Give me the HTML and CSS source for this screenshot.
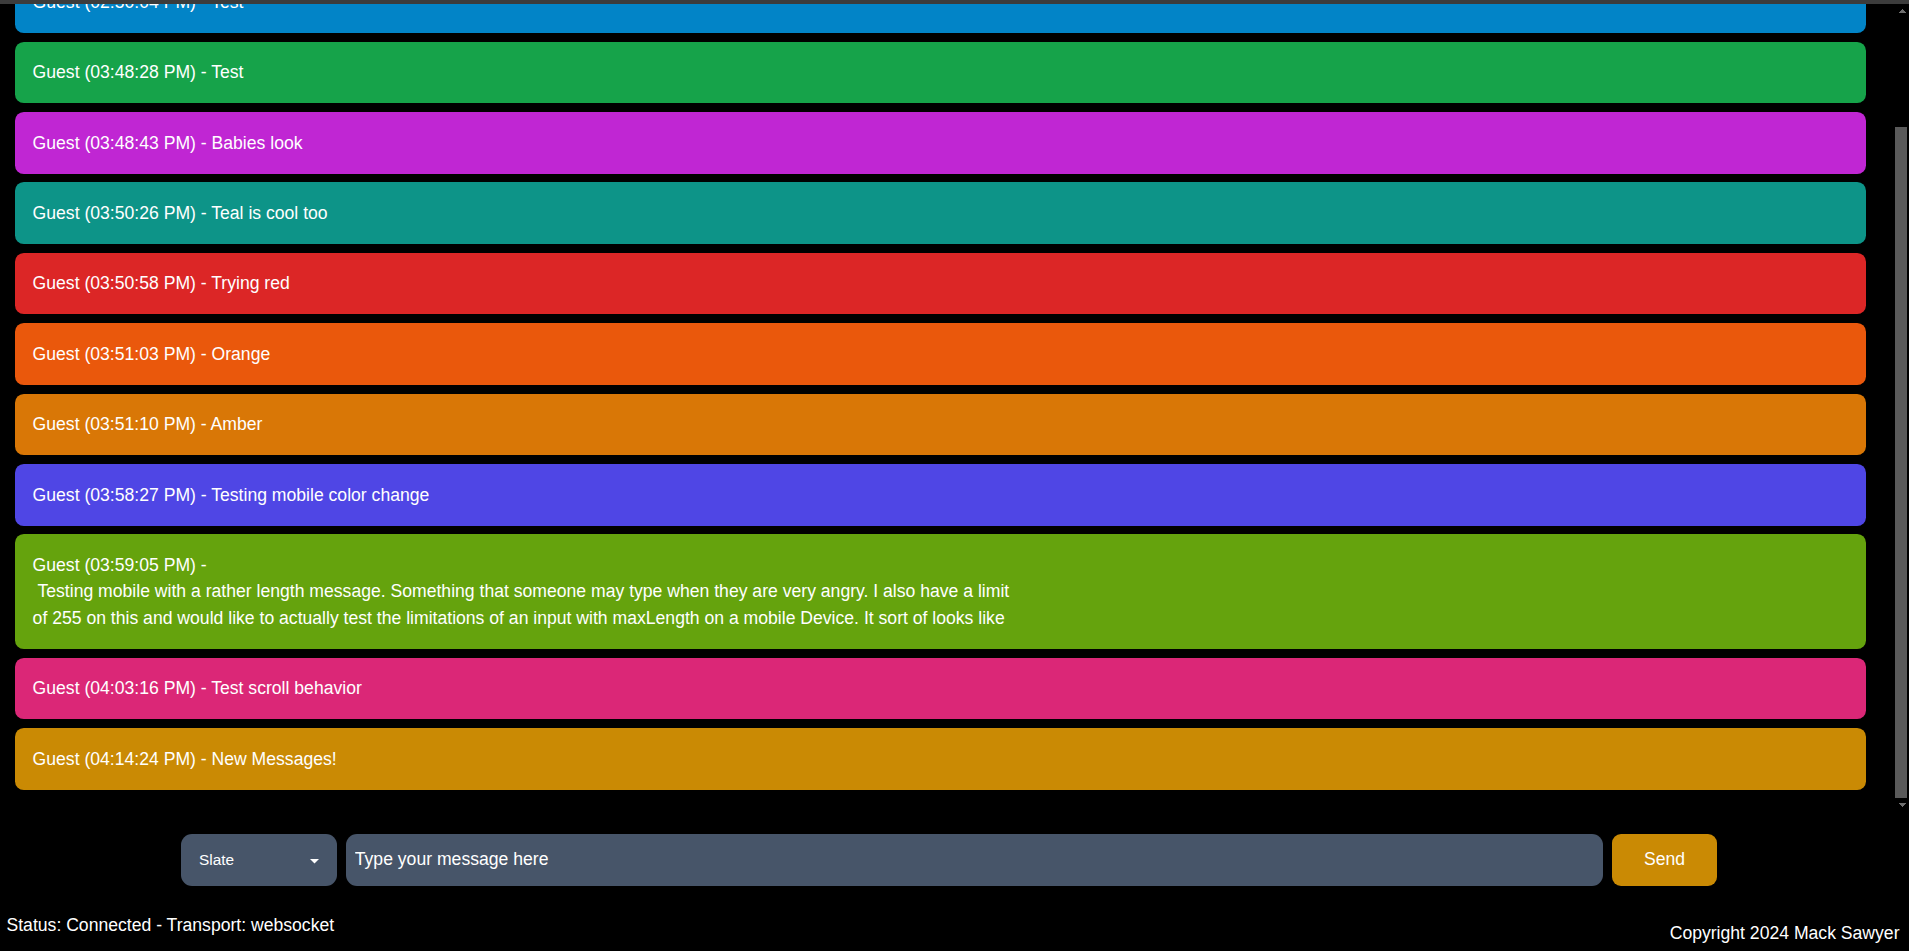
FILE: index.html
```html
<!DOCTYPE html>
<html lang="en">
<head>
<meta charset="utf-8">
<title>Chat</title>
<link rel="stylesheet" href="styles.css">
</head>
<body>
<div class="topbar"></div>
<div class="chat-area">
  <main class="chat">
    <div class="log">
      <div class="msg sky">Guest (02:49:12 PM) - Hello there</div>
      <div class="msg sky">Guest (02:50:04 PM) - Test</div>
      <div class="msg green">Guest (03:48:28 PM) - Test</div>
      <div class="msg fuchsia">Guest (03:48:43 PM) - Babies look</div>
      <div class="msg teal">Guest (03:50:26 PM) - Teal is cool too</div>
      <div class="msg red">Guest (03:50:58 PM) - Trying red</div>
      <div class="msg orange">Guest (03:51:03 PM) - Orange</div>
      <div class="msg amber">Guest (03:51:10 PM) - Amber</div>
      <div class="msg indigo">Guest (03:58:27 PM) - Testing mobile color change</div>
      <div class="msg lime">Guest (03:59:05 PM) - <br>&nbsp;Testing mobile with a rather length message. Something that someone may type when they are very angry. I also have a limit<br>of 255 on this and would like to actually test the limitations of an input with maxLength on a mobile Device. It sort of looks like</div>
      <div class="msg pink">Guest (04:03:16 PM) - Test scroll behavior</div>
      <div class="msg yellow">Guest (04:14:24 PM) - New Messages!</div>
    </div>
  </main>
  <div class="scrollbar" aria-hidden="true">
    <div class="sb-btn sb-up"></div>
    <div class="sb-track"><div class="sb-thumb"></div></div>
    <div class="sb-btn sb-down"></div>
  </div>
</div>
<form class="composer">
  <div class="select-wrap">
    <select class="color-select"><option>Slate</option></select>
    <svg class="caret" width="9" height="5" viewBox="0 0 9 5"><path d="M0 0H9L4.5 4.5Z" fill="#fff"/></svg>
  </div>
  <input class="message-input" type="text" placeholder="Type your message here">
  <button class="send" type="button">Send</button>
</form>
<footer class="footer">
  <span class="status">Status: Connected - Transport: websocket</span>
  <span class="copyright">Copyright 2024 Mack Sawyer</span>
</footer>
</body>
</html>
```

FILE: styles.css
```css
html, body {
  margin: 0;
  padding: 0;
  background: #000;
  color: #fff;
  font-family: "Liberation Sans", Arial, sans-serif;
  font-size: 17.6px;
  height: 100%;
  overflow: hidden;
}

.topbar {
  height: 4px;
  background: #3c3c3c;
}

.chat-area {
  display: flex;
  height: 808px;
}

.chat {
  flex: 1;
  min-width: 0;
  overflow: hidden;
  display: flex;
  flex-direction: column-reverse;
}

.log {
  flex: none;
  display: flex;
  flex-direction: column;
  gap: 8.8px;
  padding: 29px 28px 22.4px 15px;
}

.msg {
  padding: 17.6px;
  line-height: 26.4px;
  border-radius: 8.8px;
  color: #fff;
}

.sky { background: #0284c7; }
.green { background: #16a34a; }
.fuchsia { background: #c026d3; }
.teal { background: #0d9488; }
.red { background: #dc2626; }
.orange { background: #ea580c; }
.amber { background: #d97706; }
.indigo { background: #4f46e5; }
.lime { background: #65a30d; }
.pink { background: #db2777; }
.yellow { background: #ca8a04; }

.scrollbar {
  width: 15px;
  flex: none;
  display: flex;
  flex-direction: column;
  background: #000;
}

.sb-btn {
  height: 14px;
  flex: none;
  background-repeat: no-repeat;
  background-position: 5px center;
  background-size: 7px 4px;
}
.sb-up {
  background-image: conic-gradient(from 135deg at 50% 0, #6e6e6e 90deg, transparent 0);
}
.sb-down {
  background-image: conic-gradient(from -45deg at 50% 100%, #6e6e6e 90deg, transparent 0);
}

.sb-track {
  flex: 1;
  display: flex;
  flex-direction: column;
  justify-content: flex-end;
}

.sb-thumb {
  height: 671px;
  margin: 0 2px 0 1px;
  background: #5a5a5a;
}

.composer {
  display: flex;
  gap: 9px;
  width: 1536px;
  height: 52.8px;
  margin: 21.6px 0 0 181px;
}

.select-wrap {
  position: relative;
  width: 156px;
  flex: none;
}

.color-select {
  appearance: none;
  -webkit-appearance: none;
  width: 100%;
  height: 100%;
  border: none;
  border-radius: 11px;
  background: #475569;
  color: #fff;
  font-family: "Liberation Sans", Arial, sans-serif;
  font-size: 15.4px;
  padding: 0 0 0 18px;
  margin: 0;
  outline: none;
}

.caret {
  position: absolute;
  right: 18px;
  top: 25px;
  pointer-events: none;
}

.message-input {
  flex: 1;
  min-width: 0;
  height: 100%;
  box-sizing: border-box;
  border: none;
  border-radius: 11px;
  background: #475569;
  color: #fff;
  font-family: "Liberation Sans", Arial, sans-serif;
  font-size: 17.6px;
  padding: 0 8.8px;
  margin: 0;
  outline: none;
}
.message-input::placeholder {
  color: #fff;
  opacity: 1;
}

.send {
  width: 105px;
  flex: none;
  height: 100%;
  border: none;
  border-radius: 9px;
  background: #ca8a04;
  color: #fff;
  font-family: "Liberation Sans", Arial, sans-serif;
  font-size: 17.6px;
  padding: 0;
  margin: 0;
}

.footer {
  display: flex;
  justify-content: space-between;
  align-items: flex-start;
  padding: 29px 9.5px 0 6.5px;
  line-height: normal;
}

.copyright {
  padding-top: 7.6px;
}
```
